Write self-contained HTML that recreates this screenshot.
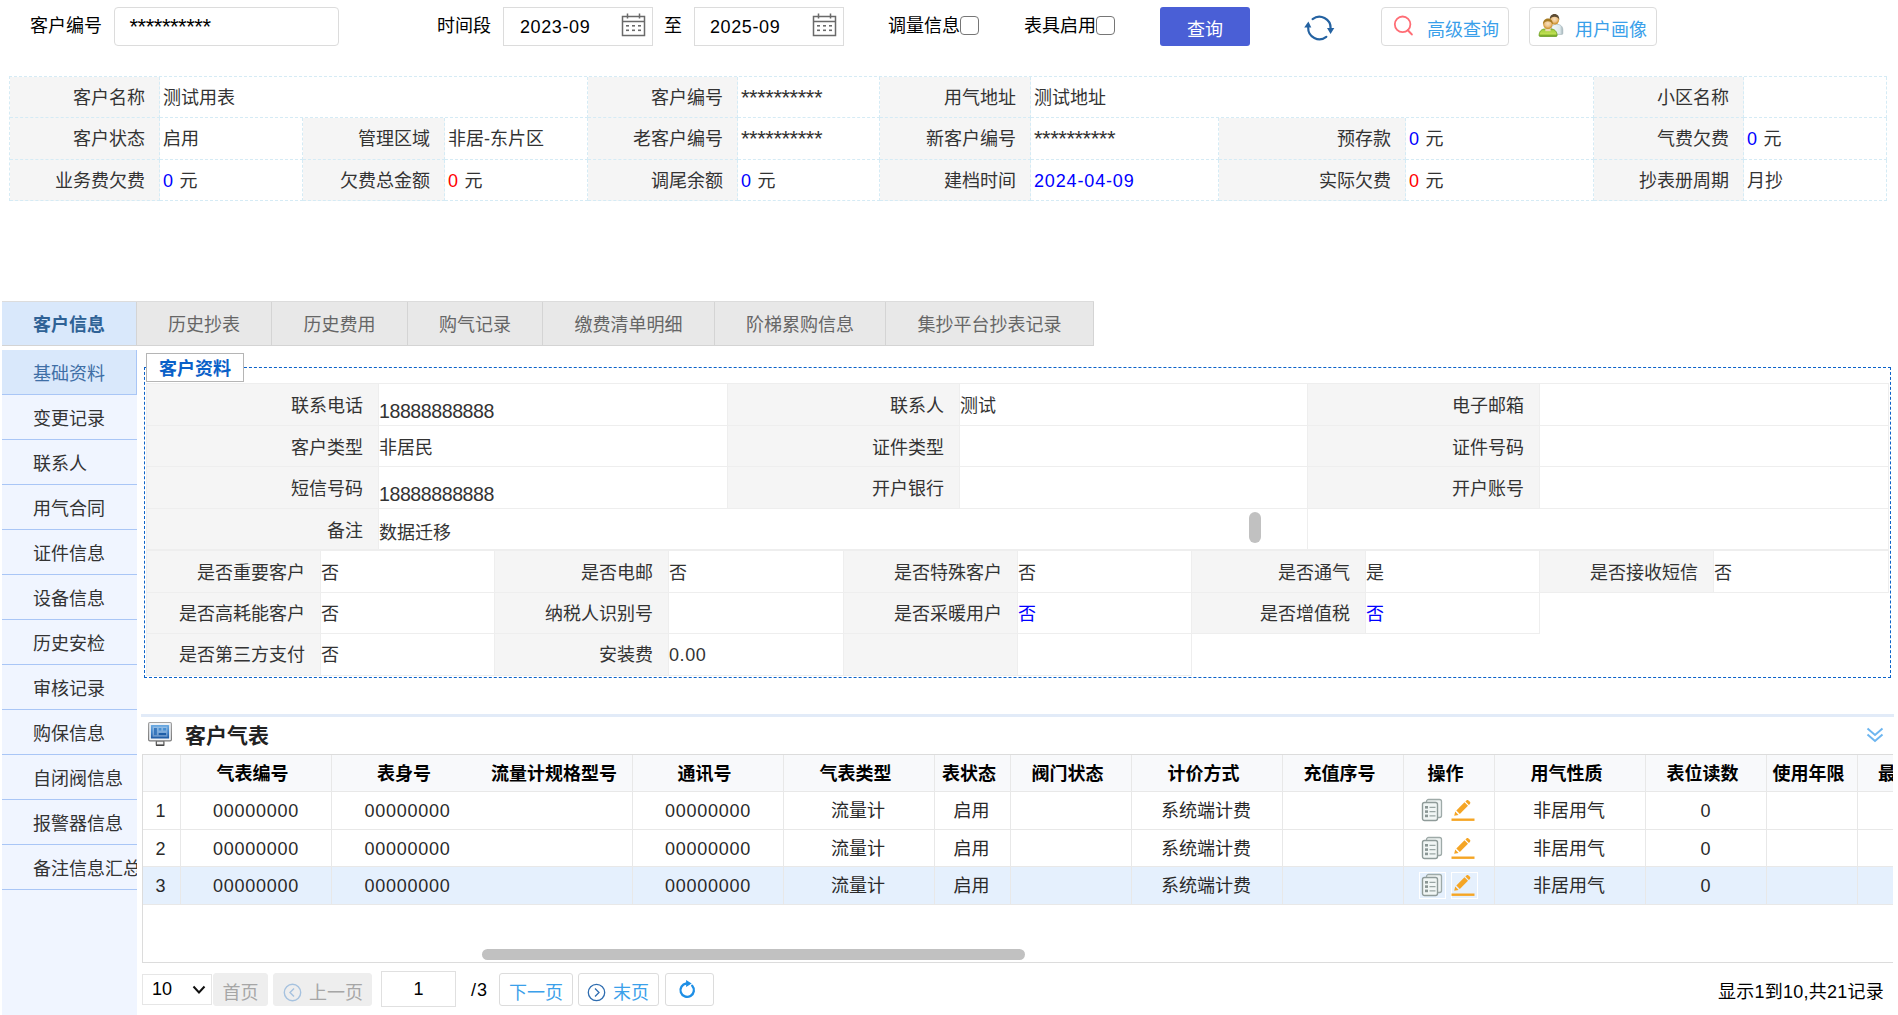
<!DOCTYPE html>
<html lang="zh-CN">
<head>
<meta charset="utf-8">
<title>客户信息</title>
<style>
*{box-sizing:border-box;}
html,body{margin:0;padding:0;}
body{width:1898px;height:1015px;overflow:hidden;position:relative;background:#fff;color:#333;
 font-family:"Liberation Sans","Noto Sans CJK SC",sans-serif;font-size:18px;}
.abs{position:absolute;}
.lbl{position:absolute;color:#000;line-height:24px;height:24px;white-space:nowrap;}
.inp{position:absolute;top:7px;height:39px;border:1px solid #dcdcdc;background:#fff;}
.inp span{position:absolute;top:1px;line-height:37px;color:#000;white-space:nowrap;}
.num{letter-spacing:.6px;}
.chk{position:absolute;top:16px;width:19px;height:19px;border:1.5px solid #767676;border-radius:4px;background:#fff;}
.btn{position:absolute;top:7px;height:39px;border:1px solid #dcdcdc;border-radius:4px;background:#fff;}
.btn span{position:absolute;top:3.5px;line-height:37px;color:#3aa0ea;white-space:nowrap;}
/* info grid */
.g1{position:absolute;left:9px;top:76px;display:grid;border-left:1px dashed #d5ebf5;border-top:1px dashed #d5ebf5;
 grid-template-columns:150px 143px 142px 143px 150px 142px 151px 188px 187px 188px 150px 143px;
 grid-template-rows:41px 42px 41px;}
.g1 div{border-right:1px dashed #d5ebf5;border-bottom:1px dashed #d5ebf5;white-space:nowrap;overflow:hidden;
 line-height:40px;padding:1px 0 0 3px;color:#333;}
.g1 .l{background:#f5f5f5;text-align:right;padding:1px 14px 0 0;}
.ast{font-size:22px;letter-spacing:-.46px;}

/* tabs */
.tabs{position:absolute;left:2px;top:301px;height:45px;display:flex;border-top:1px solid #dcdcdc;border-bottom:1px solid #d4d4d4;}
.tabs div{height:43px;line-height:43px;padding:2px 0 0;text-align:center;border-right:1px solid #d4d4d4;background:#e8e8e8;color:#666;white-space:nowrap;}
.tabs .on{background:#d9e8fb;color:#2f6296;font-weight:bold;border-right-color:#d4d4d4;}
/* sidebar */
.side{position:absolute;left:2px;top:350px;width:135px;height:665px;background:#f0f5ff;}
.side div{height:45px;line-height:44px;padding:2px 0 0 31px;border-bottom:1px solid #a9c6f6;white-space:nowrap;overflow:hidden;color:#333;}
.side .on{background:#d9e8fb;color:#3f6fa6;border-right:1px solid #a9c6f6;}
/* fieldset */
.fs{position:absolute;left:144px;top:367px;width:1747px;height:311px;border:1px dashed #0b62c9;}
.lg{position:absolute;left:146px;top:353px;width:98px;height:29px;border:1px solid #b5b5b5;background:#fff;color:#0a60c8;font-weight:bold;line-height:27px;text-align:center;padding-top:2px;}
.g2{position:absolute;left:146px;top:383px;display:grid;border-left:1px solid #eee;border-top:1px solid #eee;
 grid-template-columns:232px 349px 232px 348px 232px 349px;grid-template-rows:42px 41px 42px 41px;}
.g3{position:absolute;left:146px;top:550px;display:grid;border-left:1px solid #eee;border-top:1px solid #eee;
 grid-template-columns:174px 174px 174px 175px 174px 174px 174px 174px 174px 175px;grid-template-rows:42px 41px 42px;}
.g2 div,.g3 div{border-right:1px solid #eee;border-bottom:1px solid #eee;white-space:nowrap;overflow:hidden;line-height:40px;padding:1px 0 0 0;color:#333;}
.g2 .l,.g3 .l{background:#f5f5f5;text-align:right;padding:1px 15px 0 0;}
.g3 .e{border:none;}
.g2 div,.g2 .l,.g3 div:nth-child(-n+10){padding-top:2px;}

/* grid panel */
.ptop{position:absolute;left:141px;top:714px;width:1753px;height:3px;background:#e2ebf8;}
.ptitle{position:absolute;left:185px;top:722px;font-size:21px;font-weight:bold;color:#222;line-height:28px;white-space:nowrap;}
.dg{position:absolute;left:142px;top:754px;width:1751px;height:209px;border:1px solid #dcdcdc;border-right:none;overflow:hidden;background:#fff;}
.dg table{border-collapse:separate;border-spacing:0;table-layout:fixed;width:1900px;}
.dg th,.dg td{border-right:1px solid #e8e8e8;border-bottom:1px solid #e8e8e8;text-align:center;white-space:nowrap;overflow:hidden;padding:0;color:#000;}
.dg th{height:37px;background:#f8f9fb;font-weight:bold;line-height:34px;padding:1px 7px 0 0;}
.dg td{height:38px;line-height:34px;padding:1px 2px 0 0;color:#2a2a2a;}
.dg tr.r2 td{height:37px;}
.dg td.num{padding-right:0;letter-spacing:.75px;}
.dg tr.sel td{background:#e5f0fd;}
.dg .nb{border-right:0;}
.ia,.ib{display:inline-block;width:27px;height:27px;line-height:23px;border:1px solid transparent;vertical-align:middle;}
.ib{border-color:#fff;}
.dg td.op{padding:0 2px 0 0;line-height:30px;font-size:0;}
.sb{position:absolute;left:482px;top:949px;width:543px;height:11px;border-radius:6px;background:#c1c1c1;}
/* pager */
.pg{position:absolute;top:973px;height:33px;border:1px solid #dcdcdc;border-radius:3px;background:#fff;color:#3aa0ea;white-space:nowrap;line-height:30px;}
.pg.dis{background:#eee;border-color:#eee;color:#a6a6a6;}
.pg span{position:absolute;top:4px;}
.g1 span{margin-right:1.5px;}
.b{color:#0000ff !important;}
.r{color:#ff0000 !important;}
</style>
</head>
<body>
<!-- ===== top bar ===== -->
<div class="lbl" style="left:30px;top:14px;">客户编号</div>
<div class="inp" style="left:114px;width:225px;border-radius:4px;"><span class="ast" style="left:14.5px;top:0px;">**********</span></div>
<div class="lbl" style="left:437px;top:14px;">时间段</div>
<div class="inp" style="left:503px;width:150px;"><span class="num" style="left:16px;">2023-09</span>
<svg class="abs" style="left:116.5px;top:4px" width="25" height="26" viewBox="0 0 25 26"><g fill="none" stroke="#6a6a6a" stroke-width="1.5"><rect x="1.5" y="4.5" width="22" height="19"/><path d="M1.5 9.5h22M6.5 1.5v5M18.5 1.5v5"/></g><g fill="#6a6a6a"><rect x="5" y="13" width="3" height="1.6"/><rect x="11" y="13" width="3" height="1.6"/><rect x="17" y="13" width="3" height="1.6"/><rect x="5" y="17.5" width="3" height="1.6"/><rect x="11" y="17.5" width="3" height="1.6"/><rect x="17" y="17.5" width="3" height="1.6"/></g></svg></div>
<div class="lbl" style="left:664px;top:14px;">至</div>
<div class="inp" style="left:694px;width:150px;"><span class="num" style="left:15px;">2025-09</span>
<svg class="abs" style="left:116.5px;top:4px" width="25" height="26" viewBox="0 0 25 26"><g fill="none" stroke="#6a6a6a" stroke-width="1.5"><rect x="1.5" y="4.5" width="22" height="19"/><path d="M1.5 9.5h22M6.5 1.5v5M18.5 1.5v5"/></g><g fill="#6a6a6a"><rect x="5" y="13" width="3" height="1.6"/><rect x="11" y="13" width="3" height="1.6"/><rect x="17" y="13" width="3" height="1.6"/><rect x="5" y="17.5" width="3" height="1.6"/><rect x="11" y="17.5" width="3" height="1.6"/><rect x="17" y="17.5" width="3" height="1.6"/></g></svg></div>
<div class="lbl" style="left:888px;top:14px;">调量信息</div>
<div class="chk" style="left:960px;"></div>
<div class="lbl" style="left:1024px;top:14px;">表具启用</div>
<div class="chk" style="left:1096px;"></div>
<div class="abs" style="left:1160px;top:7px;width:90px;height:39px;background:#4a5fd6;border-radius:3px;color:#fff;text-align:center;line-height:39px;padding-top:4px;">查询</div>
<svg class="abs" style="left:1295px;top:8px" width="50" height="40" viewBox="0 0 50 40"><g fill="none" stroke="#2462a1" stroke-width="2.2" stroke-linecap="round"><path d="M17.600 11.100A11.200 11.200 0 0 1 35.600 20.300"/><path d="M31.300 28.800A11.200 11.200 0 0 1 13.200 19.600"/></g><path d="M32 20.100h7.300l-3.700 6z" fill="#2462a1"/><path d="M9.200 19.400h7.100l-2.900-5.800z" fill="#2462a1"/></svg>
<div class="btn" style="left:1381px;width:128px;"><svg class="abs" style="left:3px;top:0px" width="40" height="36" viewBox="0 0 40 36"><circle cx="17.600" cy="16.300" r="7.800" fill="none" stroke="#ff6d75" stroke-width="1.800"/><path d="M22.800 22.200l4 4.200" stroke="#ff6d75" stroke-width="2.100" stroke-linecap="round"/></svg><span style="left:45px;">高级查询</span></div>
<div class="btn" style="left:1529px;width:128px;"><svg class="abs" style="left:0px;top:0px" width="40" height="36" viewBox="0 0 40 36"><defs><radialGradient id="hd" cx=".5" cy=".42" r=".6"><stop offset="0" stop-color="#f8e0be"/><stop offset=".5" stop-color="#eec58c"/><stop offset="1" stop-color="#c4820c"/></radialGradient><linearGradient id="gr" x1="0" y1="0" x2="0" y2="1"><stop offset="0" stop-color="#9cc93a"/><stop offset=".65" stop-color="#bfe052"/><stop offset="1" stop-color="#5f9418"/></linearGradient><linearGradient id="wh" x1="0" y1="0" x2="1" y2="0"><stop offset="0" stop-color="#f4f9fa"/><stop offset=".75" stop-color="#dde9ec"/><stop offset="1" stop-color="#9fb0b6"/></linearGradient></defs><path d="M21.500 26.400v-6.500c0-2.300 2-3.600 5.300-3.600 3.600 0 6 2.100 6 5.600v3.500c0 .6-.4 1-1 1z" fill="url(#wh)" stroke="#a9b8bd" stroke-width=".7"/><circle cx="24.500" cy="11.900" r="4.600" fill="url(#hd)"/><path d="M19.700 12c-.3-3.700 1.900-6 4.800-6s5.100 2.300 4.800 6c-.9-2.200-2.500-3.300-4.800-3.300s-3.900 1.100-4.800 3.300z" fill="#5c4b33"/><path d="M9.100 27.400c0-3.900 2.400-6.400 5.600-6.400h6.600c3.100 0 5.800 2.500 5.800 6.400 0 .6-.4 1-1 1h-16c-.6 0-1-.4-1-1z" fill="url(#gr)" stroke="#679a1d" stroke-width=".8"/><rect x="15.300" y="20.600" width="5.300" height="2.600" fill="#e9d9b0"/><circle cx="17.900" cy="16.400" r="4.700" fill="url(#hd)"/><path d="M13 16.600c-.3-3.800 1.900-6.200 4.900-6.200s5.200 2.400 4.900 6.200c-.9-2.300-2.600-3.400-4.900-3.400s-4 1.100-4.900 3.400z" fill="#a67a22"/></svg><span style="left:45px;">用户画像</span></div>

<!-- ===== customer summary grid ===== -->
<div class="g1">
<div class="l">客户名称</div><div style="grid-column:span 3">测试用表</div><div class="l">客户编号</div><div class="ast" style="padding-top:1px">**********</div><div class="l">用气地址</div><div style="grid-column:span 3">测试地址</div><div class="l">小区名称</div><div></div>
<div class="l">客户状态</div><div>启用</div><div class="l">管理区域</div><div>非居-东片区</div><div class="l">老客户编号</div><div class="ast" style="padding-top:1px">**********</div><div class="l">新客户编号</div><div class="ast" style="padding-top:1px">**********</div><div class="l">预存款</div><div><span class="b">0</span> 元</div><div class="l">气费欠费</div><div><span class="b">0</span> 元</div>
<div class="l">业务费欠费</div><div><span class="b">0</span> 元</div><div class="l">欠费总金额</div><div><span class="r">0</span> 元</div><div class="l">调尾余额</div><div><span class="b">0</span> 元</div><div class="l">建档时间</div><div class="b num" style="letter-spacing:.85px">2024-04-09</div><div class="l">实际欠费</div><div><span class="r">0</span> 元</div><div class="l">抄表册周期</div><div>月抄</div>
</div>

<!-- ===== tabs ===== -->
<div class="tabs"><div class="on" style="width:135px">客户信息</div><div style="width:135px">历史抄表</div><div style="width:136px">历史费用</div><div style="width:135px">购气记录</div><div style="width:172px">缴费清单明细</div><div style="width:171px">阶梯累购信息</div><div style="width:208px">集抄平台抄表记录</div></div>

<!-- ===== sidebar ===== -->
<div class="side"><div class="on">基础资料</div><div>变更记录</div><div>联系人</div><div>用气合同</div><div>证件信息</div><div>设备信息</div><div>历史安检</div><div>审核记录</div><div>购保信息</div><div>自闭阀信息</div><div>报警器信息</div><div>备注信息汇总</div></div>

<!-- ===== customer detail fieldset ===== -->
<div class="fs"></div>
<div class="lg">客户资料</div>
<div class="g2">
<div class="l">联系电话</div><div style="padding-top:7px;font-size:19.6px;letter-spacing:-.45px">18888888888</div><div class="l">联系人</div><div>测试</div><div class="l">电子邮箱</div><div></div>
<div class="l">客户类型</div><div>非居民</div><div class="l">证件类型</div><div></div><div class="l">证件号码</div><div></div>
<div class="l">短信号码</div><div style="padding-top:7px;font-size:19.6px;letter-spacing:-.45px">18888888888</div><div class="l">开户银行</div><div></div><div class="l">开户账号</div><div></div>
<div class="l">备注</div><div style="grid-column:span 3;position:relative;padding-top:4px">数据迁移<i style="position:absolute;left:870px;top:2.5px;width:11.500px;height:31.500px;border-radius:6px;background:#c1c1c1"></i></div><div style="grid-column:span 2"></div>
</div>
<div class="g3">
<div class="l">是否重要客户</div><div>否</div><div class="l">是否电邮</div><div>否</div><div class="l">是否特殊客户</div><div>否</div><div class="l">是否通气</div><div>是</div><div class="l">是否接收短信</div><div>否</div>
<div class="l">是否高耗能客户</div><div>否</div><div class="l">纳税人识别号</div><div></div><div class="l">是否采暖用户</div><div class="b">否</div><div class="l">是否增值税</div><div class="b">否</div><div class="e"></div><div class="e"></div>
<div class="l">是否第三方支付</div><div>否</div><div class="l">安装费</div><div class="num">0.00</div><div class="l"></div><div></div><div class="e"></div><div class="e"></div><div class="e"></div><div class="e"></div>
</div>

<!-- ===== meter grid ===== -->
<div class="ptop"></div>
<svg class="abs" style="left:142px;top:716px" width="40" height="36" viewBox="0 0 40 36"><defs><linearGradient id="scr" x1="0" y1="0" x2="0" y2="1"><stop offset="0" stop-color="#6aaae2"/><stop offset=".6" stop-color="#3a7cc4"/><stop offset="1" stop-color="#1d58a2"/></linearGradient><linearGradient id="fr" x1="0" y1="0" x2="0" y2="1"><stop offset="0" stop-color="#a3a3a3"/><stop offset="1" stop-color="#7a7a7a"/></linearGradient></defs><rect x="14.300" y="24.800" width="7.600" height="4.400" rx=".8" fill="#f2f2f2" stroke="#555" stroke-width="1.200"/><path d="M13.900 29.300h8.400" stroke="#3c3c3c" stroke-width="1.100"/><rect x="6.600" y="6.500" width="22.800" height="18.400" rx="1.300" fill="#eef1f5" stroke="url(#fr)" stroke-width="1.200"/><rect x="8.900" y="8.900" width="18.200" height="13.600" rx=".6" fill="url(#scr)"/><rect x="10.600" y="10.600" width="14.800" height="10.100" fill="#fff" fill-opacity=".32"/><rect x="12" y="12" width="2.900" height="7.100" fill="#2a6cb6" fill-opacity=".85"/><rect x="16.700" y="12" width="2.600" height="2.500" fill="#3f8bd2" fill-opacity=".9"/><rect x="21.100" y="12" width="3" height="2.500" fill="#3f8bd2" fill-opacity=".9"/><rect x="16.700" y="17" width="7.400" height="2.100" fill="#1f5ea8"/></svg>
<div class="ptitle">客户气表</div>
<svg class="abs" style="left:1866px;top:727px" width="18" height="16" viewBox="0 0 18 16"><g fill="none" stroke="#6db6f0" stroke-width="2"><path d="M1.500 1.500l7.500 6.500 7.500-6.500"/><path d="M1.500 7.500l7.500 6.500 7.500-6.500"/></g></svg>
<div class="dg"><table>
<colgroup><col style="width:38px"><col style="width:151px"><col style="width:151px"><col style="width:150px"><col style="width:151px"><col style="width:151px"><col style="width:76px"><col style="width:121px"><col style="width:151px"><col style="width:121px"><col style="width:91px"><col style="width:151px"><col style="width:121px"><col style="width:91px"><col style="width:185px"></colgroup>
<tr><th></th><th>气表编号</th><th class="nb">表身号</th><th>流量计规格型号</th><th>通讯号</th><th>气表类型</th><th>表状态</th><th>阀门状态</th><th>计价方式</th><th>充值序号</th><th>操作</th><th>用气性质</th><th>表位读数</th><th>使用年限</th><th style="text-align:left;padding-left:20px">最后抄表</th></tr>
<tr><td>1</td><td class="num">00000000</td><td class="num nb">00000000</td><td></td><td class="num">00000000</td><td>流量计</td><td>启用</td><td></td><td>系统端计费</td><td></td><td class="op"><span class="ia"><svg width="23" height="24" viewBox="0 0 23 24" style="vertical-align:middle"><rect x="5.500" y="1.500" width="15" height="18" rx="2" fill="#eef3f2" stroke="#9eaaa8" stroke-width="1.3"/><rect x="1.500" y="4.500" width="15" height="18" rx="2" fill="#f1f6f5" stroke="#8f9b99" stroke-width="1.4"/><g fill="#8a9694"><rect x="4" y="8" width="3" height="2.600"/><rect x="4" y="12.300" width="3" height="2.600"/><rect x="4" y="16.600" width="3" height="2.600"/></g><g stroke="#9aa6a4" stroke-width="1.200"><path d="M8.500 9.300h6M8.500 13.600h6M8.500 17.900h6"/></g></svg></span><span class="ia" style="margin-left:5px"><svg width="24" height="22" viewBox="0 0 24 22" style="vertical-align:middle;position:relative;top:2px;left:-1px"><path d="M0.500 19.700h23" stroke="#f5a524" stroke-width="2.400"/><path d="M3.200 15.800l1-4.200 3.400 3.300z" fill="#f5a524"/><path d="M5.300 10.500l8.200-8.200 3.500 3.500-8.200 8.200z" fill="#f5a524"/><path d="M14.400 1.400l1-1c.6-.6 1.500-.6 2.100 0l1.400 1.400c.6.600.6 1.500 0 2.100l-1 1z" fill="#f5a524"/></svg></span></td><td>非居用气</td><td class="num">0</td><td></td><td></td></tr>
<tr class="r2"><td>2</td><td class="num">00000000</td><td class="num nb">00000000</td><td></td><td class="num">00000000</td><td>流量计</td><td>启用</td><td></td><td>系统端计费</td><td></td><td class="op"><span class="ia"><svg width="23" height="24" viewBox="0 0 23 24" style="vertical-align:middle"><rect x="5.500" y="1.500" width="15" height="18" rx="2" fill="#eef3f2" stroke="#9eaaa8" stroke-width="1.3"/><rect x="1.500" y="4.500" width="15" height="18" rx="2" fill="#f1f6f5" stroke="#8f9b99" stroke-width="1.4"/><g fill="#8a9694"><rect x="4" y="8" width="3" height="2.600"/><rect x="4" y="12.300" width="3" height="2.600"/><rect x="4" y="16.600" width="3" height="2.600"/></g><g stroke="#9aa6a4" stroke-width="1.200"><path d="M8.500 9.300h6M8.500 13.600h6M8.500 17.900h6"/></g></svg></span><span class="ia" style="margin-left:5px"><svg width="24" height="22" viewBox="0 0 24 22" style="vertical-align:middle;position:relative;top:2px;left:-1px"><path d="M0.500 19.700h23" stroke="#f5a524" stroke-width="2.400"/><path d="M3.200 15.800l1-4.200 3.400 3.300z" fill="#f5a524"/><path d="M5.300 10.500l8.200-8.200 3.500 3.500-8.200 8.200z" fill="#f5a524"/><path d="M14.400 1.400l1-1c.6-.6 1.500-.6 2.100 0l1.400 1.400c.6.600.6 1.500 0 2.100l-1 1z" fill="#f5a524"/></svg></span></td><td>非居用气</td><td class="num">0</td><td></td><td></td></tr>
<tr class="sel"><td>3</td><td class="num">00000000</td><td class="num nb">00000000</td><td></td><td class="num">00000000</td><td>流量计</td><td>启用</td><td></td><td>系统端计费</td><td></td><td class="op"><span class="ib"><svg width="23" height="24" viewBox="0 0 23 24" style="vertical-align:middle"><rect x="5.500" y="1.500" width="15" height="18" rx="2" fill="#eef3f2" stroke="#9eaaa8" stroke-width="1.3"/><rect x="1.500" y="4.500" width="15" height="18" rx="2" fill="#f1f6f5" stroke="#8f9b99" stroke-width="1.4"/><g fill="#8a9694"><rect x="4" y="8" width="3" height="2.600"/><rect x="4" y="12.300" width="3" height="2.600"/><rect x="4" y="16.600" width="3" height="2.600"/></g><g stroke="#9aa6a4" stroke-width="1.200"><path d="M8.500 9.300h6M8.500 13.600h6M8.500 17.900h6"/></g></svg></span><span class="ib" style="margin-left:5px"><svg width="24" height="22" viewBox="0 0 24 22" style="vertical-align:middle;position:relative;top:2px;left:-1px"><path d="M0.500 19.700h23" stroke="#f5a524" stroke-width="2.400"/><path d="M3.200 15.800l1-4.200 3.400 3.300z" fill="#f5a524"/><path d="M5.300 10.500l8.200-8.200 3.500 3.500-8.200 8.200z" fill="#f5a524"/><path d="M14.400 1.400l1-1c.6-.6 1.500-.6 2.100 0l1.400 1.400c.6.600.6 1.500 0 2.100l-1 1z" fill="#f5a524"/></svg></span></td><td>非居用气</td><td class="num">0</td><td></td><td></td></tr>
</table></div>
<div class="sb"></div>

<!-- ===== pager ===== -->
<div class="abs" style="left:142px;top:974px;width:70px;height:31px;border:1px solid #e6e6e6;color:#000;line-height:28px;"><span class="abs" style="left:9px;top:0">10</span><svg class="abs" style="left:49px;top:10px" width="14" height="10" viewBox="0 0 14 10"><path d="M1.500 1.500l5.500 6 5.500-6" fill="none" stroke="#111" stroke-width="2"/></svg></div>
<div class="pg dis" style="left:212.5px;width:55.5px;"><span style="left:9px">首页</span></div>
<div class="pg dis" style="left:273px;width:99px;"><svg class="abs" style="left:8.5px;top:8.500px" width="19" height="19" viewBox="0 0 19 19"><circle cx="9.500" cy="9.500" r="8.200" fill="none" stroke="#a6c2df" stroke-width="1.400"/><path d="M11 5.500l-4 4 4 4" fill="none" stroke="#a6c2df" stroke-width="1.400"/></svg><span style="left:35px">上一页</span></div>
<div class="abs" style="left:381px;top:971px;width:75px;height:36px;border:1px solid #e0e0e0;text-align:center;line-height:34px;color:#000;">1</div>
<div class="abs" style="left:471px;top:976px;line-height:28px;color:#000;letter-spacing:1px;">/3</div>
<div class="pg" style="left:499px;width:74px;"><span style="left:9px">下一页</span></div>
<div class="pg" style="left:578px;width:81px;"><svg class="abs" style="left:7.500px;top:8.500px" width="19" height="19" viewBox="0 0 19 19"><circle cx="9.500" cy="9.500" r="8.200" fill="none" stroke="#2f6db0" stroke-width="1.300"/><path d="M8 5.500l4 4-4 4" fill="none" stroke="#2f6db0" stroke-width="1.300"/></svg><span style="left:34px">末页</span></div>
<div class="pg" style="left:665px;width:49px;"><svg class="abs" style="left:1px;top:-2px" width="40" height="36" viewBox="0 0 40 36"><path d="M25.200 13.700A6.700 6.700 0 1 1 19.300 11.500" fill="none" stroke="#1e8fe6" stroke-width="2.300" stroke-linecap="round"/><path d="M19.100 7.900l5.600 3.500-5.600 3.700z" fill="#1e8fe6"/></svg></div>
<div class="abs" style="right:14px;top:977.5px;line-height:28px;color:#000;white-space:nowrap;letter-spacing:.25px;">显示1到10,共21记录</div>


</body>
</html>
